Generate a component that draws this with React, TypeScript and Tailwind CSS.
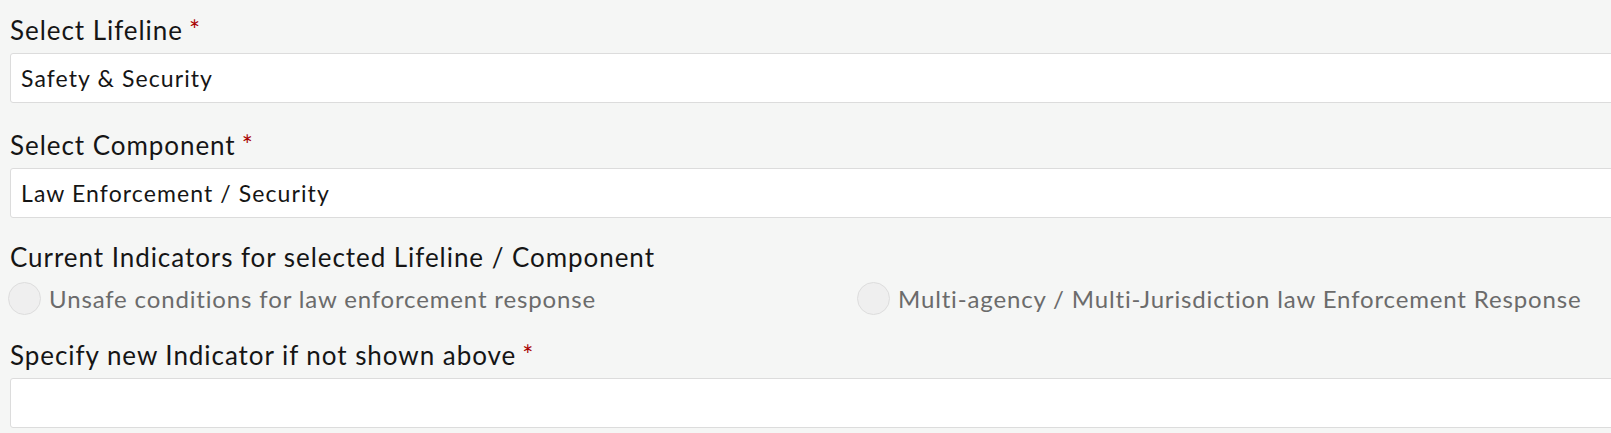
const lifelineIndicators = [
  "Unsafe conditions for law enforcement response",
  "Multi-agency / Multi-Jurisdiction law Enforcement Response",
];

const Label = ({ text, required }: { text: string; required?: boolean }) => (
  <label className="block text-[26px] leading-[32px] tracking-[0.95px] text-[#151515]">
    {text}
    {required && <span className="ml-[6px] text-[#a80000]">*</span>}
  </label>
);

const Field = ({ value }: { value: string }) => (
  <div className="mt-[7px] h-[50px] w-full rounded-[3px] border border-[#dcdcdc] bg-white pl-[10px] flex items-center text-[23px] tracking-[1.1px] text-[#151515]">
    {value}
  </div>
);

export default function App() {
  return (
    <div className="h-[433px] w-full overflow-hidden bg-[#f5f6f5] font-['Lato',sans-serif]">
      <div className="w-[1720px] pl-[10px] pt-[14px]">
        <Label text="Select Lifeline" required />
        <Field value="Safety & Security" />

        <div className="mt-[26px]">
          <Label text="Select Component" required />
          <Field value="Law Enforcement / Security" />
        </div>

        <div className="mt-[23px]">
          <Label text="Current Indicators for selected Lifeline / Component" />
          <div className="mt-[9px] -ml-[2px] flex">
            {lifelineIndicators.map((item, i) => (
              <label
                key={i}
                className="flex h-[33px] w-[849px] items-center gap-[8px] text-[24px] tracking-[0.85px] text-[#6b6b6b]"
              >
                <span className="h-[33px] w-[33px] shrink-0 rounded-full border border-[#dddddd] bg-[#efefef]" />
                {item}
              </label>
            ))}
          </div>
        </div>

        <div className="mt-[24px]">
          <Label text="Specify new Indicator if not shown above" required />
          <Field value="" />
        </div>
      </div>
    </div>
  );
}
